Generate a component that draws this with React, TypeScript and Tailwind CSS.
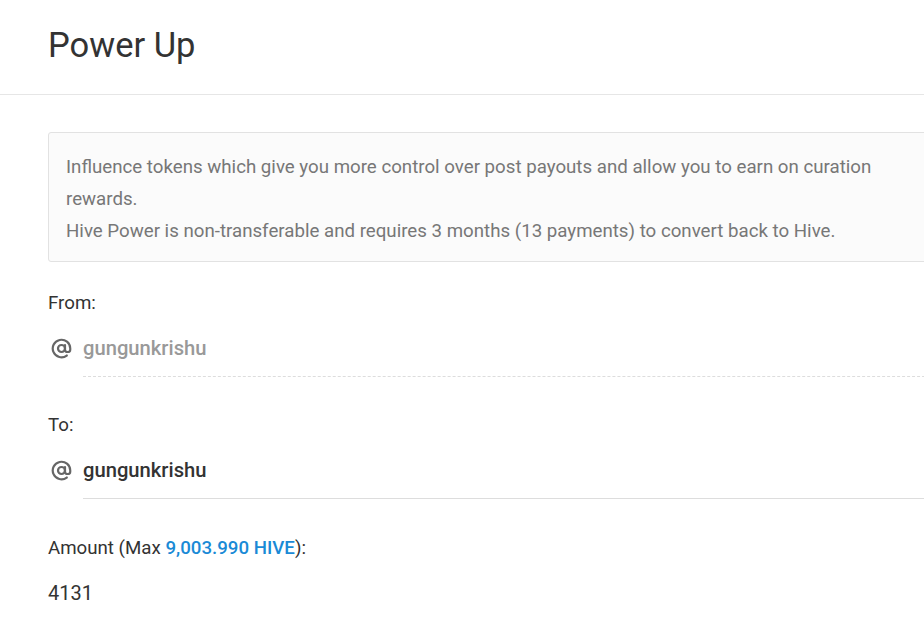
import { AtSign } from "lucide-react";

export default function App() {
    return (
        <div
            className="w-full h-[619px] overflow-hidden bg-white text-[#333]"
            style={{ fontFamily: "Roboto, 'Liberation Sans', sans-serif" }}
        >
            {/* Header */}
            <div className="h-[95px] border-b border-[#e6e6e6] flex items-center px-12">
                <h1 className="text-[34.5px] leading-none pb-[4px]">Power Up</h1>
            </div>

            {/* Form */}
            <div className="w-[1000px] pl-12 pt-[37px]">
                <div className="border border-[#e2e2e2] bg-[#fbfbfb] rounded-[3px] px-[17px] pt-[18px] pb-[14px] text-[18.7px] leading-[32px] text-[#777]">
                    <p>
                        Influence tokens which give you more control over post payouts and allow you to earn on curation
                        <br />
                        rewards.
                    </p>
                    <p>Hive Power is non-transferable and requires 3 months (13 payments) to convert back to Hive.</p>
                </div>

                <div className="mt-[29px] text-[18.7px] leading-[24px]">From:</div>
                <div className="mt-[21px] flex items-center h-[24px]">
                    <span className="w-[35px] text-[#666] flex">
                        <AtSign size={21} strokeWidth={2.5} className="ml-[3px]" />
                    </span>
                    <span className="text-[20.2px] font-medium text-[#999]">gungunkrishu</span>
                </div>
                <div className="ml-[35px] mt-[16px] border-b border-dashed border-[#ddd]" />

                <div className="mt-[36px] text-[18.7px] leading-[24px]">To:</div>
                <div className="mt-[21px] flex items-center h-[24px]">
                    <span className="w-[35px] text-[#666] flex">
                        <AtSign size={21} strokeWidth={2.5} className="ml-[3px]" />
                    </span>
                    <span className="text-[20.2px] font-medium text-[#333]">gungunkrishu</span>
                </div>
                <div className="ml-[35px] mt-[16px] border-b border-[#ddd]" />

                <div className="mt-[37px] text-[18.7px] leading-[24px]">
                    Amount (Max <span className="text-[#1a8ad6] font-medium">9,003.990 HIVE</span>):
                </div>
                <div className="mt-[21px] text-[20px] leading-[24px]">4131</div>
            </div>
        </div>
    );
}
